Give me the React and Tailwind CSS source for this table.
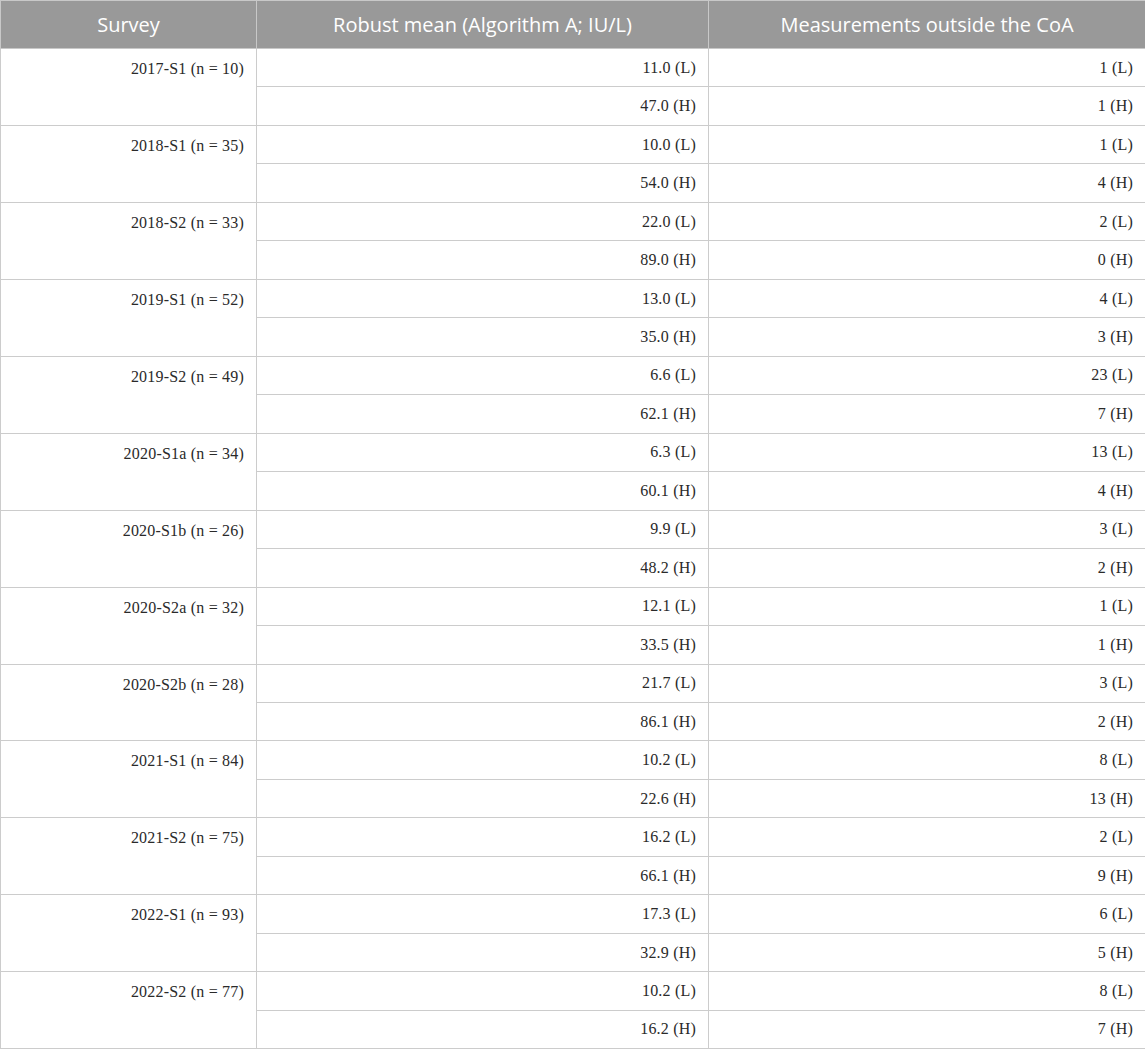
import React from "react";

const data = [
  ["2017-S1 (n = 10)", "11.0 (L)", "1 (L)", "47.0 (H)", "1 (H)"],
  ["2018-S1 (n = 35)", "10.0 (L)", "1 (L)", "54.0 (H)", "4 (H)"],
  ["2018-S2 (n = 33)", "22.0 (L)", "2 (L)", "89.0 (H)", "0 (H)"],
  ["2019-S1 (n = 52)", "13.0 (L)", "4 (L)", "35.0 (H)", "3 (H)"],
  ["2019-S2 (n = 49)", "6.6 (L)", "23 (L)", "62.1 (H)", "7 (H)"],
  ["2020-S1a (n = 34)", "6.3 (L)", "13 (L)", "60.1 (H)", "4 (H)"],
  ["2020-S1b (n = 26)", "9.9 (L)", "3 (L)", "48.2 (H)", "2 (H)"],
  ["2020-S2a (n = 32)", "12.1 (L)", "1 (L)", "33.5 (H)", "1 (H)"],
  ["2020-S2b (n = 28)", "21.7 (L)", "3 (L)", "86.1 (H)", "2 (H)"],
  ["2021-S1 (n = 84)", "10.2 (L)", "8 (L)", "22.6 (H)", "13 (H)"],
  ["2021-S2 (n = 75)", "16.2 (L)", "2 (L)", "66.1 (H)", "9 (H)"],
  ["2022-S1 (n = 93)", "17.3 (L)", "6 (L)", "32.9 (H)", "5 (H)"],
  ["2022-S2 (n = 77)", "10.2 (L)", "8 (L)", "16.2 (H)", "7 (H)"],
];

export default function App() {
  return (
    <div className="w-[1145px] bg-white">
      <table className="w-[1145px] table-fixed border-collapse text-[#2a2a2a]" style={{ fontFamily: '"Liberation Serif", serif' }}>
        <colgroup>
          <col className="w-[256px]" />
          <col className="w-[452px]" />
          <col className="w-[437px]" />
        </colgroup>
        <thead>
          <tr className="h-[48px] bg-[#999999] text-white text-[20px] font-['Open_Sans',sans-serif] font-normal">
            <th className="border border-[#c8c8c8] font-normal px-3">Survey</th>
            <th className="border border-[#c8c8c8] font-normal px-3">Robust mean (Algorithm A; IU/L)</th>
            <th className="border border-[#c8c8c8] font-normal px-3">Measurements outside the CoA</th>
          </tr>
        </thead>
        <tbody className="text-[16px] tracking-[0.2px]">
          {data.map((r, i) => (
            <React.Fragment key={i}>
              <tr className="h-[38.48px]">
                <td rowSpan={2} className="border border-[#cccccc] align-top text-right px-3 pt-[8px]">{r[0]}</td>
                <td className="border border-[#cccccc] text-right px-3">{r[1]}</td>
                <td className="border border-[#cccccc] text-right px-3">{r[2]}</td>
              </tr>
              <tr className="h-[38.48px]">
                <td className="border border-[#cccccc] text-right px-3">{r[3]}</td>
                <td className="border border-[#cccccc] text-right px-3">{r[4]}</td>
              </tr>
            </React.Fragment>
          ))}
        </tbody>
      </table>
    </div>
  );
}
